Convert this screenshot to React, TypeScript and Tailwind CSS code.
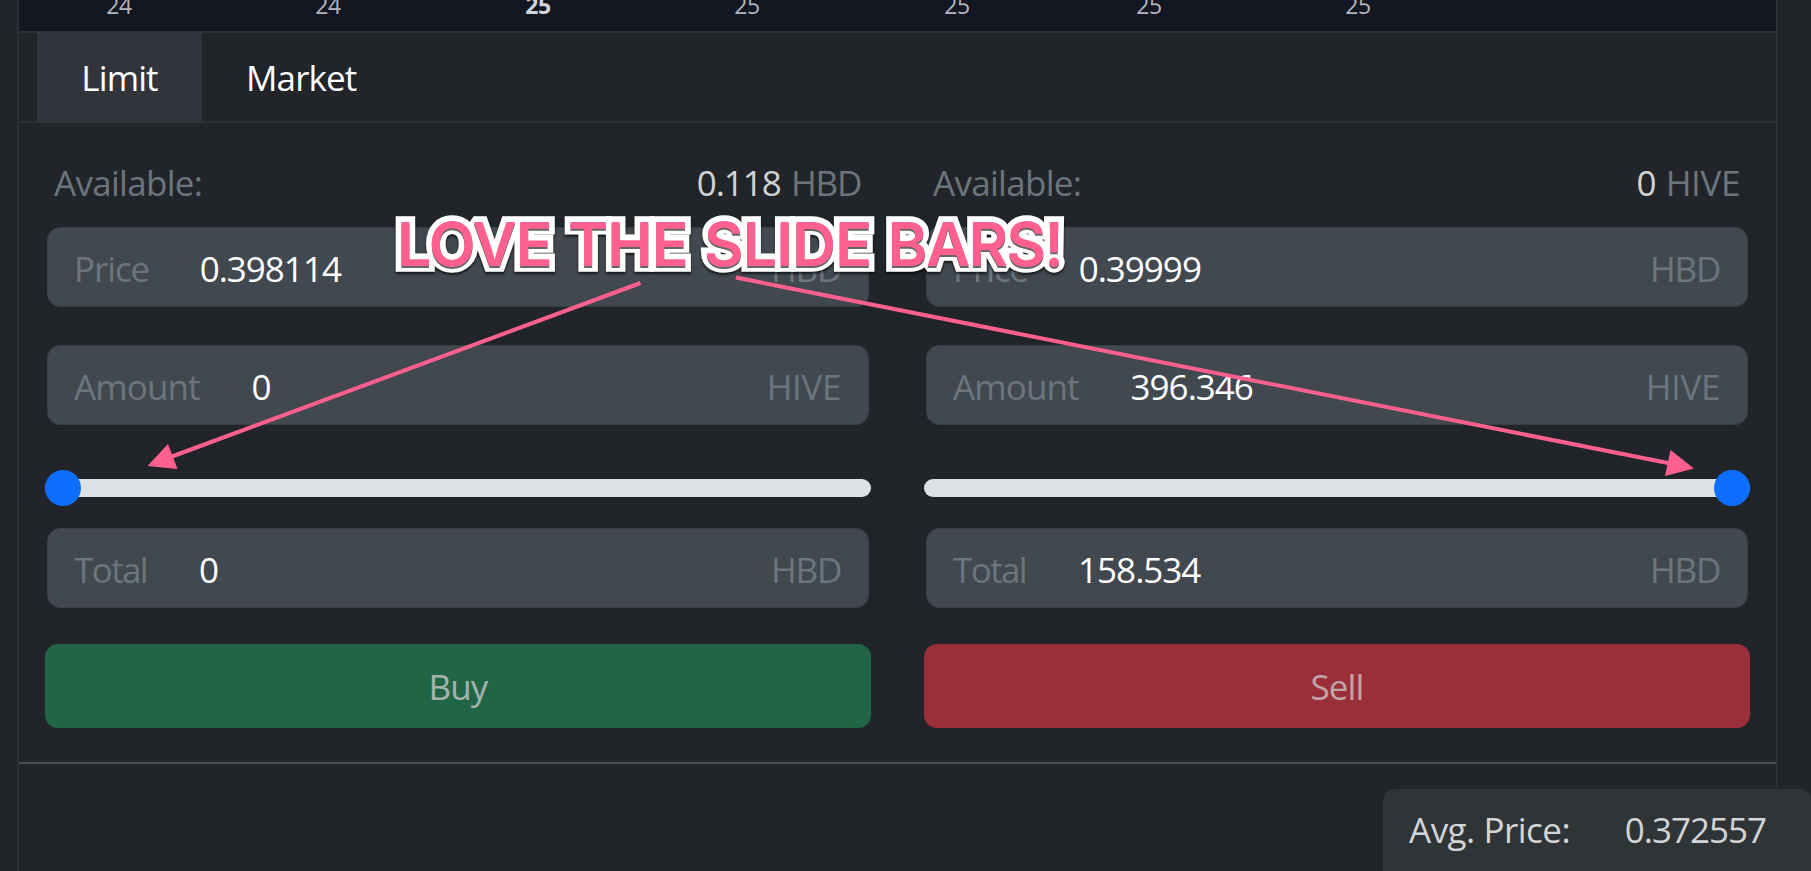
import React from 'react';

interface FieldProps {
  label: string;
  value: string;
  unit: string;
  className?: string;
  labelClassName?: string;
}

interface OrderFormProps {
  currency: string;
  available: string;
  price: string;
  amount: string;
  total: string;
  percent: number;
  action: 'Buy' | 'Sell';
}

const ticks = [
  { label: '24', className: 'ml-[87px] font-medium' },
  { label: '24', className: 'ml-[183px] font-medium' },
  { label: '25', className: 'ml-[184px] font-bold text-[#d1d4dc]' },
  { label: '25', className: 'ml-[183px] font-medium' },
  { label: '25', className: 'ml-[184px] font-medium' },
  { label: '25', className: 'ml-[166px] font-medium' },
  { label: '25', className: 'ml-[183px] font-medium' },
];

const Unit: React.FC<{ name: string }> = ({ name }) => (
  <span className={name === 'HBD' ? 'tracking-[-1.3px]' : 'tracking-[-0.4px]'}>{name}</span>
);

const Field: React.FC<FieldProps> = ({ label, value, unit, className = '', labelClassName = '' }) => (
  <div
    className={`mx-0.5 flex h-20 items-center rounded-[13px] border border-[#393e44] bg-[#42484f] pr-[27px] pl-[26px] pt-1 text-[#6c757d] ${className}`}
  >
    <span className={labelClassName}>{label}</span>
    <span className="ml-[52px] flex-1 tracking-[-1px] text-white">{value}</span>
    <Unit name={unit} />
  </div>
);

const Slider: React.FC<{ percent: number }> = ({ percent }) => (
  <div className="relative mt-[45px] flex h-9 items-center">
    <div className="h-[18px] w-full rounded-full bg-[#dee2e6]" />
    <div
      className="absolute top-0 size-9 rounded-full bg-[#0d6efd]"
      style={{ left: `calc(${percent}% - ${(percent * 36) / 100}px)` }}
    />
  </div>
);

const OrderForm: React.FC<OrderFormProps> = (props) => (
  <div className="flex-1">
    <div className="flex h-[52px] items-center justify-between pr-2.5 pl-[9px] text-[#6c757d]">
      <span className="tracking-[-0.7px]">Available:</span>
      <span>
        <span className="mr-0.5 tracking-[-1px] text-[#d3d4d5]">{props.available}</span>{' '}
        <Unit name={props.currency} />
      </span>
    </div>
    <Field
      label="Price"
      value={props.price}
      unit="HBD"
      className="mt-[18px]"
      labelClassName="mr-[-1.5px] tracking-[-1.1px]"
    />
    <Field label="Amount" value={props.amount} unit="HIVE" className="mt-[38px]" />
    <Slider percent={props.percent} />
    <Field
      label="Total"
      value={props.total}
      unit="HBD"
      className="mt-[22px]"
      labelClassName="tracking-[-1.6px]"
    />
    <button
      className={`mt-[36px] block h-[84px] w-full rounded-[13px] pt-0.5 ${
        props.action === 'Buy' ? 'bg-[#206546] text-[#a6b3ad]' : 'bg-[#9a2e39] text-[#c0a5a9]'
      }`}
    >
      {props.action}
    </button>
  </div>
);

const Annotation: React.FC = () => (
  <svg className="absolute inset-0 h-[871px] w-[1811px]" viewBox="0 0 1811 871">
    <defs>
      <text
        id="note"
        x="397"
        y="266"
        className="font-['Inter'] text-[61px] font-semibold tracking-[-1px] [word-spacing:2px]"
      >
        LOVE THE SLIDE <tspan className="tracking-[-1.8px]">BARS!</tspan>
      </text>
    </defs>
    <g stroke="#ff6090" strokeWidth="4">
      <path d="M640.5 283 172 456.5" />
      <path d="M736 277.5 1668 463" />
    </g>
    <g fill="#ff6090">
      <path d="m147.5 466 20.5-22 9.5 25z" />
      <path d="m1694 468.5-23.5-18.5-5.5 26z" />
    </g>
    <use
      href="#note"
      fill="#fff"
      stroke="#fff"
      strokeWidth="11.5"
      strokeMiterlimit="1.6"
      className="[filter:drop-shadow(0_2px_1px_rgba(0,0,0,0.7))]"
    />
    <use href="#note" fill="#ff6090" className="[filter:drop-shadow(0_2px_0.5px_rgba(0,0,0,0.6))]" />
  </svg>
);

export default function App() {
  return (
    <div className="relative h-[871px] w-[1811px] overflow-hidden bg-[#212529] font-['Open_Sans','Noto_Sans',sans-serif] text-[35px] leading-[52px] tracking-[-0.9px]">
      <div className="ml-[17px] h-full w-[1761px] border-x-2 border-[#2d3136]">
        <div className="flex h-[31px] bg-[#131722] text-[23px] leading-[30px] tracking-[-0.5px] text-[#b2b5be]">
          {ticks.map((tick, i) => (
            <span key={i} className={`-mt-2.5 w-[26px] text-center ${tick.className}`}>
              {tick.label}
            </span>
          ))}
        </div>

        <nav className="flex h-[92px] border-y-2 border-[#2d3136] pl-[18px] text-white">
          <button className="-my-px w-[165px] bg-[#31353b] pt-0.5">Limit</button>
          <button className="px-[44px] pt-0.5">Market</button>
        </nav>

        <div className="flex h-[641px] gap-[53px] border-b-2 border-[#4a4d51] px-[26px] pt-[34px]">
          <OrderForm
            action="Buy"
            currency="HBD"
            available="0.118"
            price="0.398114"
            amount="0"
            percent={0}
            total="0"
          />
          <OrderForm
            action="Sell"
            currency="HIVE"
            available="0"
            price="0.39999"
            amount="396.346"
            percent={100}
            total="158.534"
          />
        </div>
      </div>

      <div className="absolute top-[789px] left-[1383px] flex h-[100px] w-[429px] justify-between rounded-xl bg-[#2f3437] pt-[15px] pr-[46px] pl-[26px] text-[#d3d4d5]">
        <span className="tracking-[-0.5px]">Avg. Price:</span>
        <span className="tracking-[-1px]">0.372557</span>
      </div>

      <Annotation />
    </div>
  );
}
